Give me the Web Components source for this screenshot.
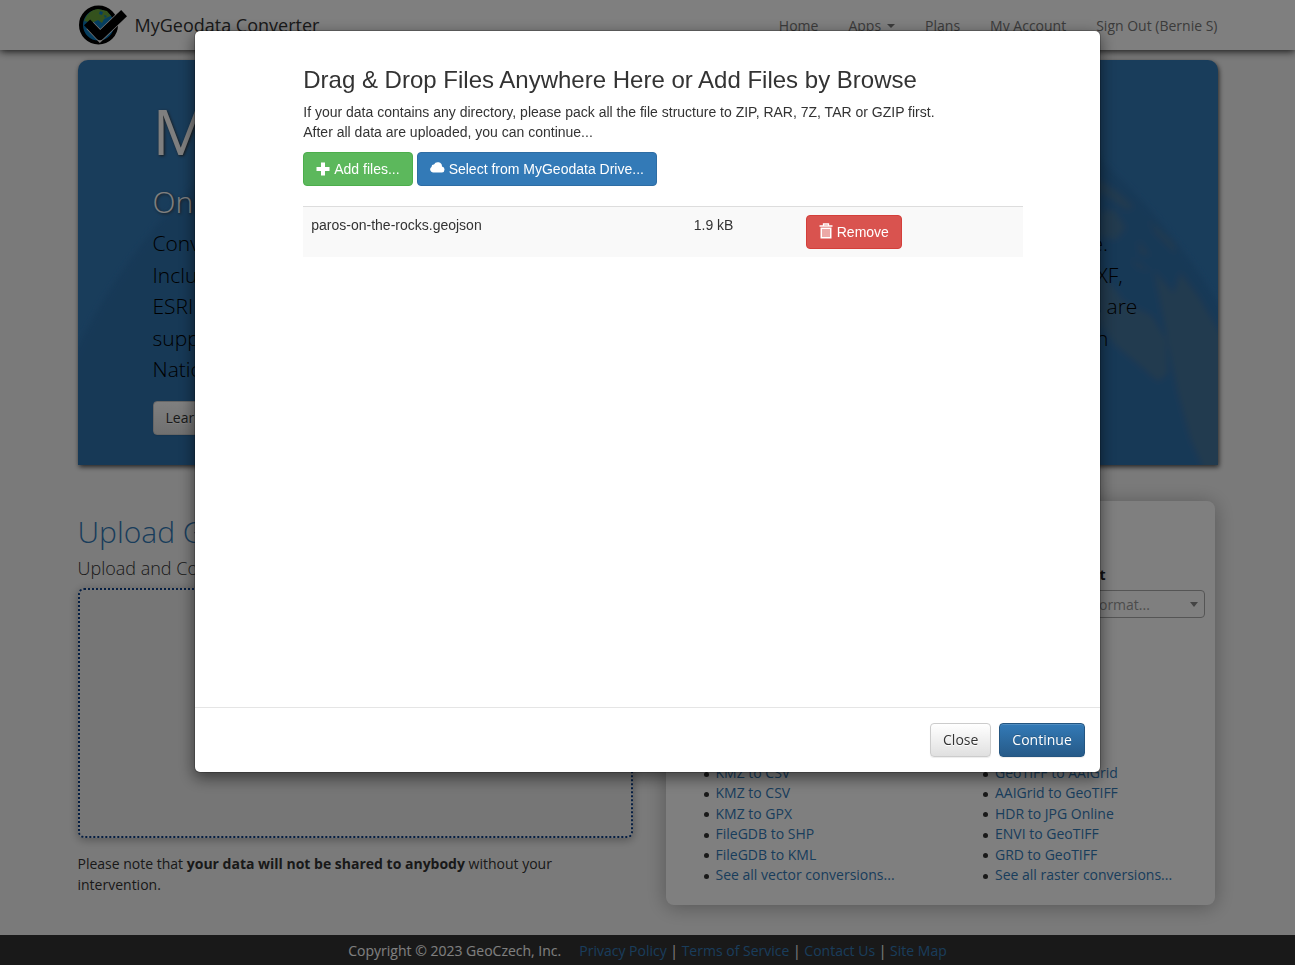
<!DOCTYPE html>
<html lang="en">
<head>
<meta charset="utf-8">
<meta name="viewport" content="width=device-width, initial-scale=1">
<title>MyGeodata Converter</title>
<style>
  body { margin: 0; background: #f5f5f5; color: #333; font: 14px/20px "Open Sans", sans-serif; }
</style>
</head>
<body>
<geo-app></geo-app>

<template id="geo-app">
  <style>
    :host { display: flex; flex-direction: column; min-height: 100vh; }
    main { width: 100%; max-width: 1170px; box-sizing: border-box; margin: 10px auto 30px; padding: 0 15px; }
    .columns { display: grid; grid-template-columns: 1fr 1fr; gap: 30px; margin-top: 36px; }
    geo-footer { margin-top: auto; }
  </style>
  <geo-navbar></geo-navbar>
  <main>
    <geo-hero></geo-hero>
    <div class="columns">
      <geo-upload></geo-upload>
      <geo-formats></geo-formats>
    </div>
  </main>
  <geo-footer></geo-footer>
  <geo-modal>
    <geo-uploader></geo-uploader>
    <geo-button slot="footer" variant="default">Close</geo-button>
    <geo-button slot="footer" variant="primary">Continue</geo-button>
  </geo-modal>
</template>

<template id="geo-navbar">
  <style>
    :host { display: block; position: relative; background: #fff; box-shadow: 0 1px 8px rgba(0,0,0,.9); }
    .inner { display: flex; justify-content: space-between; align-items: center; max-width: 1140px; height: 50px; margin: 0 auto; }
    .brand { display: flex; align-items: center; gap: 8px; color: #333; font-size: 18px; text-decoration: none; }
    svg { display: block; }
    nav { display: flex; gap: 30px; padding-top: 2px; }
    nav a { display: flex; align-items: center; color: #777; text-decoration: none; }
    .caret { margin-left: 6px; border: 4px solid transparent; border-top-color: currentColor; border-bottom: 0; }
  </style>
  <div class="inner">
    <a class="brand" href="#">
      <svg width="49" height="42" viewBox="0 0 49 42" aria-hidden="true">
        <circle cx="20.500" cy="21" r="17.500" fill="#0b7cc0" stroke="#000" stroke-width="4"/>
        <path d="M6 18C8 10 13 6 20 5l9 2 4 5-3 1-4 2-2 4-4-3-4 2-3 3-3-3-3-1z" fill="#68a53a"/>
        <path d="M22 7l3 1-1 3-3-1zM26 11l3 1-2 2z" fill="#0b7cc0"/>
        <path d="M12 21.500L22 32L43 12" fill="none" stroke="#eee" stroke-width="10"/>
        <path d="M12 21.500L22 32L43 12" fill="none" stroke="#000" stroke-width="8.500" stroke-linejoin="round" stroke-linecap="square"/>
      </svg>
      <span>MyGeodata Converter</span>
    </a>
    <nav>
      <a href="#">Home</a>
      <a href="#">Apps <span class="caret"></span></a>
      <a href="#">Plans</a>
      <a href="#">My Account</a>
      <a href="#">Sign Out (Bernie S)</a>
    </nav>
  </div>
</template>

<template id="geo-hero">
  <style>
    :host { display: block; position: relative; padding: 36px 75px 30px; background: #337ab7; border-radius: 10px 10px 0 0; box-shadow: 1px 2px 5px rgba(0,0,0,.7); }
    .globe { position: absolute; inset: 0; width: 100%; height: 100%; border-radius: 10px 10px 0 0; }
    .content { position: relative; }
    h1 { margin: 0 0 20px; color: #fff; font-size: 63px; line-height: 69px; font-weight: 400; text-shadow: 1px 1px 3px #333; }
    h2 { margin: 0 0 10px; color: #fff; font-size: 30px; line-height: 33px; font-weight: 300; text-shadow: 1px 1px 3px #333; }
    p { margin: 0 0 15px; color: #000; font-size: 21px; line-height: 1.5; font-weight: 300; }
  </style>
  <svg class="globe" viewBox="0 0 1140 405" preserveAspectRatio="xMidYMid slice" aria-hidden="true">
    <defs><filter id="soft" x="-10%" y="-10%" width="120%" height="120%"><feGaussianBlur stdDeviation="3"/></filter></defs>
    <g filter="url(#soft)">
      <circle cx="582" cy="580" r="652" fill="#2e72ad"/>
      <g fill="#45769e">
        <path d="M1020 120l22 14 14 14-8 2-28-20zM1024 152l12-2 12 18-10 12-16-4zM1070 160l26 24 2 10-20-20zM1060 180l12 16-10-2zM1052 198l22 14-14-4z"/>
        <path d="M1020 208l26 34 28 14 14 24 2 34-10 8-18-16-24-20-18-24z"/>
        <path d="M1076 210l20 24 6-22 18 24 32 54v130h-22l-18-42-12-44-10-50z"/>
      </g>
    </g>
  </svg>
  <div class="content">
    <h1>MyGeodata Converter</h1>
    <h2>Online GIS/CAD Data Conversion and Transformation Tool</h2>
    <p>Convert your geospatial data between all various GIS, CAD and raster formats quickly and online here.<br>
      Including simply all the most used formats like ESRI Shapefile, KML, KMZ, TAB, CSV, GeoJSON, GML, DXF,<br>
      ESRI File Geodatabase, also the GeoTIFF and also many more. Most of the known coordinate systems are<br>
      supported well, for example the WGS 84, Web Mercator, ETRS89, UTM and also the British and Irish in<br>
      National Grid.</p>
    <geo-button variant="default">Learn more</geo-button>
  </div>
</template>

<template id="geo-upload">
  <style>
    :host { display: block; }
    h2 { margin: 14px 0 10px; color: #337ab7; font-size: 30px; line-height: 33px; font-weight: 300; }
    h4 { margin: 0 0 10px; font-size: 18px; line-height: 20px; font-weight: 300; }
    .drop { height: 246px; border: 2px dotted #0c3e87; border-radius: 6px; background: #ececec; box-shadow: 0 2px 10px rgba(0,0,0,.3); }
    p { margin: 15px 0 0; line-height: 21px; max-width: 500px; }
  </style>
  <h2>Upload Geodata Files</h2>
  <h4>Upload and Convert your data</h4>
  <div class="drop"></div>
  <p>Please note that <strong>your data will not be shared to anybody</strong> without your intervention.</p>
</template>

<template id="geo-formats">
  <style>
    :host { display: flex; flex-direction: column; justify-content: space-between; box-sizing: border-box; min-height: 404px; margin: 0 3px; padding: 10px; border-radius: 8px; background: #fff; box-shadow: 0 2px 20px rgba(0,0,0,.3); }
    .row { display: grid; grid-template-columns: 1fr 1fr; gap: 30px; }
    h3 { margin: 10px 0 16px; font-size: 24px; line-height: 28px; font-weight: 300; }
    label { display: block; margin-bottom: 5px; font-weight: 700; color: #222; }
    .pick { position: relative; }
    select { display: block; width: 100%; height: 28px; padding: 2px 20px 0 8px; border: 1px solid #aaa; border-radius: 4px; background: #fff; color: #999; font: inherit; appearance: none; }
    .pick::after { content: ""; position: absolute; right: 7px; top: 12px; border: 4px solid transparent; border-top: 5px solid #888; border-bottom: 0; }
    ul { margin: 0 0 9px; padding-left: 37px; line-height: 1.46; list-style: none; }
    li { display: flex; align-items: center; gap: 7px; margin-left: -10px; }
    li { margin-left: 0; }
    ul { padding-left: 28px; }
    li::before { content: ""; width: 5px; height: 5px; margin-top: 2px; border-radius: 50%; background: #333; }
    a { color: #337ab7; text-decoration: none; }
  </style>
  <div>
    <h3>Supported formats</h3>
    <div class="row">
      <div><label for="in">Input format</label><div class="pick"><select id="in"><option>Input format...</option></select></div></div>
      <div><label for="out">Select Output Format</label><div class="pick"><select id="out"><option>Choose the Output Format...</option></select></div></div>
    </div>
  </div>
  <div class="row">
    <ul>
      <li><a href="#">KMZ to CSV</a></li>
      <li><a href="#">KMZ to CSV</a></li>
      <li><a href="#">KMZ to GPX</a></li>
      <li><a href="#">FileGDB to SHP</a></li>
      <li><a href="#">FileGDB to KML</a></li>
      <li><a href="#">See all vector conversions...</a></li>
    </ul>
    <ul>
      <li><a href="#">GeoTIFF to AAIGrid</a></li>
      <li><a href="#">AAIGrid to GeoTIFF</a></li>
      <li><a href="#">HDR to JPG Online</a></li>
      <li><a href="#">ENVI to GeoTIFF</a></li>
      <li><a href="#">GRD to GeoTIFF</a></li>
      <li><a href="#">See all raster conversions...</a></li>
    </ul>
  </div>
</template>

<template id="geo-footer">
  <style>
    :host { display: flex; justify-content: center; gap: 18px; padding: 6px 0 4px; background: #333; color: #fff; }
    a { color: #337ab7; text-decoration: none; }
  </style>
  <span>Copyright © 2023 GeoCzech, Inc.</span>
  <span><a href="#">Privacy Policy</a> | <a href="#">Terms of Service</a> | <a href="#">Contact Us</a> | <a href="#">Site Map</a></span>
</template>

<template id="geo-modal">
  <style>
    :host { position: fixed; inset: 0; display: block; overflow: auto; background: rgba(0,0,0,.5); }
    .dialog { display: flex; flex-direction: column; box-sizing: border-box; width: 70%; min-height: 743px; margin: 30px auto; border: 1px solid rgba(0,0,0,.2); border-radius: 6px; background: #fff; background-clip: padding-box; box-shadow: 0 5px 15px rgba(0,0,0,.5); }
    .body { flex: 1; padding: 36px 77px 15px 108px; }
    footer { display: flex; justify-content: flex-end; gap: 8px; padding: 15px; border-top: 1px solid #e5e5e5; }
  </style>
  <div class="dialog" role="dialog" aria-modal="true" aria-label="Add files">
    <div class="body"><slot></slot></div>
    <footer><slot name="footer"></slot></footer>
  </div>
</template>

<template id="geo-uploader">
  <style>
    :host { display: block; font-family: "Liberation Sans", Arial, sans-serif; }
    h3 { margin: 0 0 9px; font-size: 24px; line-height: 26px; font-weight: 400; }
    p { margin: 0; }
    .actions { display: flex; gap: 4px; margin: 10px 0 20px; }
    table { width: 100%; border-collapse: collapse; table-layout: fixed; }
    td { padding: 8px; border-top: 1px solid #ddd; background: #f9f9f9; vertical-align: top; }
    .size { width: 96px; }
    .act { width: 209px; }
  </style>
  <h3>Drag &amp; Drop Files Anywhere Here or Add Files by Browse</h3>
  <p>If your data contains any directory, please pack all the file structure to ZIP, RAR, 7Z, TAR or GZIP first.</p>
  <p>After all data are uploaded, you can continue...</p>
  <div class="actions">
    <geo-button variant="success">
      <svg slot="icon" width="14" height="14" viewBox="0 0 14 14" aria-hidden="true"><path d="M5 0.500h4v4.500h4.500v4H9v4.500H5V9H0.500V5H5z" fill="#fff"/></svg>
      Add files...
    </geo-button>
    <geo-button variant="info">
      <svg slot="icon" width="15" height="14" viewBox="0 0 15 14" aria-hidden="true"><path d="M3 10.500A3 3 0 0 1 1.500 5 2.400 2.400 0 0 1 4 2.600 4.200 4.200 0 0 1 12 4.400 3.100 3.100 0 0 1 12 10.500z" fill="#fff"/></svg>
      Select from MyGeodata Drive...
    </geo-button>
  </div>
  <table>
    <tbody><tr>
      <td>paros-on-the-rocks.geojson</td>
      <td class="size">1.9 kB</td>
      <td class="act"><geo-button variant="danger">
        <svg slot="icon" width="14" height="18" viewBox="0 0 14 18" aria-hidden="true"><path d="M4.500 2.500V1h5v1.500M0.500 3h13" fill="none" stroke="#fff" stroke-width="1.300"/><path d="M1.500 4.500h11V15.500h-11z" fill="#fff"/><path d="M4 6v8M6 6v8M8 6v8M10 6v8" stroke="#d9534f" stroke-width="1"/></svg>
        Remove
      </geo-button></td>
    </tr></tbody>
  </table>
</template>

<template id="geo-button">
  <style>
    :host { display: inline-block; vertical-align: top; }
    button { display: flex; align-items: center; gap: 4px; height: 34px; padding: 0 12px; border: 1px solid; border-radius: 4px; color: #fff; font: inherit; line-height: 20px; white-space: nowrap; cursor: pointer; }
    ::slotted(svg) { display: block; }
    :host([variant="default"]) button { color: #333; border-color: #ccc; background: linear-gradient(#fff, #e0e0e0); text-shadow: 0 1px 0 #fff; box-shadow: inset 0 1px 0 rgba(255,255,255,.15), 0 1px 1px rgba(0,0,0,.075); }
    :host([variant="primary"]) button { border-color: #245580; background: linear-gradient(#337ab7, #265a88); text-shadow: 0 -1px 0 rgba(0,0,0,.2); box-shadow: inset 0 1px 0 rgba(255,255,255,.15), 0 1px 1px rgba(0,0,0,.075); }
    :host([variant="success"]) button { background: #5cb85c; border-color: #4cae4c; }
    :host([variant="info"]) button { background: #337ab7; border-color: #2e6da4; }
    :host([variant="danger"]) button { background: #d9534f; border-color: #d43f3a; }
  </style>
  <button type="button"><slot name="icon"></slot><span><slot></slot></span></button>
</template>

<script>
  class GeoElement extends HTMLElement {
    constructor() {
      super();
      const template = document.getElementById(this.localName);
      this.attachShadow({ mode: 'open' }).append(template.content.cloneNode(true));
    }
  }
  for (const name of ['button', 'navbar', 'hero', 'upload', 'formats', 'footer', 'uploader', 'modal', 'app']) {
    customElements.define('geo-' + name, class extends GeoElement {});
  }
</script>
</body>
</html>
